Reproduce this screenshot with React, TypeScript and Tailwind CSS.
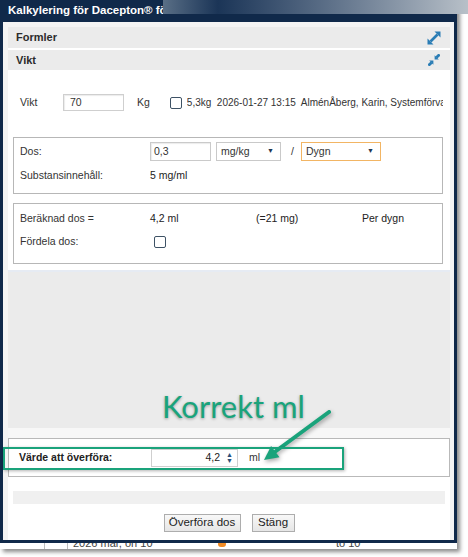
import React from "react";

function ExpandIcon() {
  return (
    <svg width="14" height="14" viewBox="0 0 14 14">
      <line x1="3.5" y1="10.5" x2="10.5" y2="3.5" stroke="#2a7db5" strokeWidth="2.6" />
      <polygon points="13.5,0.5 13.5,6.5 7.5,0.5" fill="#2a7db5" />
      <polygon points="0.5,13.5 0.5,7.5 6.5,13.5" fill="#2a7db5" />
    </svg>
  );
}

function CollapseIcon() {
  return (
    <svg width="12" height="12" viewBox="0 0 12 12" className="mr-[1px]">
      <line x1="8.4" y1="3.6" x2="11.6" y2="0.4" stroke="#2a7db5" strokeWidth="2.8" />
      <polygon points="6.6,5.4 6.6,1.2 10.8,5.4" fill="#2a7db5" />
      <line x1="3.6" y1="8.4" x2="0.4" y2="11.6" stroke="#2a7db5" strokeWidth="2.8" />
      <polygon points="5.4,6.6 5.4,10.8 1.2,6.6" fill="#2a7db5" />
    </svg>
  );
}

function Checkbox() {
  return <div className="h-[12px] w-[12px] shrink-0 rounded-[2px] border-[1.5px] border-[#3e5265] bg-white" />;
}

function SelectBox({ value, width, orange }: { value: string; width: string; orange?: boolean }) {
  return (
    <div
      className={`flex h-[19px] shrink-0 items-center justify-between bg-white pl-[4px] pr-[6px] ${width} border ${
        orange ? "border-[#f2b564]" : "border-[#c9c9c9]"
      }`}
    >
      <span>{value}</span>
      <span className="text-[7px] text-[#1d3650]">▼</span>
    </div>
  );
}

function Section({ title, icon }: { title: string; icon: React.ReactNode }) {
  return (
    <div className="flex h-full items-center justify-between bg-[#ebebeb] pl-[8px] pr-[9px] text-[11px] font-bold text-[#2b2b2b]">
      <span>{title}</span>
      {icon}
    </div>
  );
}

export default function App() {
  return (
    <div className="relative h-[557px] w-[468px] overflow-hidden bg-white font-['Liberation_Sans',Arial,sans-serif] text-[10.5px] text-[#333]">
      <div className="w-[457px] shadow-[3px_3px_4px_rgba(0,0,0,0.45)]">
        <div className="bg-[#10294a] px-[3px] pb-[3px]">
          <div className="flex h-[22px] items-center pl-[5px] text-[11.5px] font-bold text-white">
            Kalkylering för Dacepton® för
          </div>
          <div className="h-[518px] bg-[#f4f4f4] pl-[5px] pr-[4px] pt-[5px]">
            <div className="flex h-full flex-col bg-white">
              <div className="h-[21px]">
                <Section title="Formler" icon={<ExpandIcon />} />
              </div>
              <div className="mt-[2px] h-[20px]">
                <Section title="Vikt" icon={<CollapseIcon />} />
              </div>

              {/* vikt row */}
              <div className="mt-[24px] flex h-[17px] items-center whitespace-nowrap pl-[12px]">
                <span className="w-[43px] shrink-0">Vikt</span>
                <div className="flex h-[17px] w-[61px] shrink-0 items-center border border-[#cfcfcf] bg-white pl-[6px] shadow-[inset_1px_1px_1px_rgba(0,0,0,0.08)]">
                  70
                </div>
                <span className="ml-[13px] shrink-0">Kg</span>
                <div className="ml-[20px] shrink-0">
                  <Checkbox />
                </div>
                <span className="ml-[5px] mr-[7px] min-w-0 overflow-hidden whitespace-pre text-[10px]">
                  5,3kg  2026-01-27 13:15  AlménÅberg, Karin, Systemförvaltning
                </span>
              </div>

              {/* dos box */}
              <div className="ml-[5px] mr-[7px] mt-[26px] h-[57px] border border-[#b7b7b7] pl-[6px] pt-[4px]">
                <div className="flex h-[19px] items-center">
                  <span className="w-[130px] shrink-0">Dos:</span>
                  <div className="flex h-[19px] w-[61px] shrink-0 items-center border border-[#cacaca] bg-white pl-[3px] shadow-[inset_1px_1px_1px_rgba(0,0,0,0.08)]">
                    0,3
                  </div>
                  <div className="ml-[5px]">
                    <SelectBox value="mg/kg" width="w-[65px]" />
                  </div>
                  <span className="ml-[10px] w-[10px] shrink-0">/</span>
                  <SelectBox value="Dygn" width="w-[80px]" orange />
                </div>
                <div className="mt-[5px] flex h-[20px] items-center">
                  <span className="w-[130px] shrink-0">Substansinnehåll:</span>
                  <span className="text-[#222]">5 mg/ml</span>
                </div>
              </div>

              {/* beräknad box */}
              <div className="ml-[5px] mr-[7px] mt-[9px] h-[61px] border border-[#b7b7b7] pl-[6px] pt-[5px]">
                <div className="flex h-[20px] items-center">
                  <span className="w-[130px] shrink-0">Beräknad dos =</span>
                  <span className="w-[106px] shrink-0 text-[#222]">4,2 ml</span>
                  <span className="w-[106px] shrink-0 text-[#222]">(=21 mg)</span>
                  <span className="text-[#222]">Per dygn</span>
                </div>
                <div className="mt-[3px] flex h-[20px] items-center">
                  <span className="w-[134px] shrink-0">Fördela dos:</span>
                  <Checkbox />
                </div>
              </div>

              <div className="mt-[6px] h-[2px] bg-[#e6ebf3]" />
              <div className="h-[156px] bg-[#ebebeb]" />
              <div className="h-[10px] bg-[#f7f7f7]" />

              {/* värde box */}
              <div className="h-[39px] border border-[#b9b9b9] pl-[10px] pt-[10px]">
                <div className="flex h-[18px] items-center">
                  <span className="w-[132px] shrink-0 font-bold text-[#222]">Värde att överföra:</span>
                  <div className="flex h-[18px] w-[87px] shrink-0 items-center justify-end border border-[#cfcfcf] bg-white pr-[4px] text-[#222]">
                    <span>4,2</span>
                    <span className="ml-[6px] flex flex-col text-[7px] leading-[6px] text-[#2b4f7a]">
                      <span>▲</span>
                      <span>▼</span>
                    </span>
                  </div>
                  <span className="ml-[11px]">ml</span>
                </div>
              </div>

              <div className="mx-[5px] mt-[14px] h-[13px] bg-[#f0f0f0]" />

              <div className="mt-[10px] flex justify-center gap-[11px] text-[11.5px] text-[#222]">
                <div className="flex h-[18px] w-[77px] items-center justify-center border border-[#adadad] bg-gradient-to-b from-[#f8f8f8] to-[#e6e6e6]">
                  Överföra dos
                </div>
                <div className="flex h-[18px] w-[43px] items-center justify-center border border-[#adadad] bg-gradient-to-b from-[#f8f8f8] to-[#e6e6e6]">
                  Stäng
                </div>
              </div>
            </div>
          </div>
        </div>

        {/* page behind the dialog */}
        <div className="flex h-[6px] overflow-hidden bg-white text-[11px] leading-[12px] text-[#444]">
          <div className="w-[45px] border-r border-[#bdbdbd]" />
          <div className="w-[23px] border-r border-[#bdbdbd]" />
          <div className="-mt-[6px] ml-[5px] w-[145px]">2026 mar, on 10</div>
          <div className="-mt-[2px] h-[6px] w-[8px] rounded-full bg-[#f08a24]" />
          <div className="-mt-[6px] ml-[110px]">to 10</div>
        </div>
      </div>

      {/* blurred part of the title bar */}
      <div className="absolute left-[163px] top-0 h-[14px] w-[305px] bg-gradient-to-r from-[#5a6f86] via-[#1b3557] via-[18%] to-[#b8c0c8]" />

      {/* annotation */}
      <div className="absolute left-[162px] top-[383px] font-['Lato',sans-serif] text-[31px] text-[#1aa37b] [text-shadow:0_1px_3px_rgba(0,0,0,0.35)]">
        Korrekt ml
      </div>
      <svg
        className="pointer-events-none absolute left-0 top-0 drop-shadow-[1px_2px_2px_rgba(0,0,0,0.35)]"
        width="468"
        height="557"
      >
        <line x1="329" y1="412" x2="276" y2="451" stroke="#1aa37b" strokeWidth="4" strokeLinecap="round" />
        <polygon points="264,460 279.5,457.3 271.1,446.1" fill="#1aa37b" />
      </svg>
      <div className="absolute left-[3px] top-[447px] h-[23px] w-[341px] border-2 border-[#1aa37b] shadow-[1px_1px_3px_rgba(0,0,0,0.3)]" />
    </div>
  );
}
